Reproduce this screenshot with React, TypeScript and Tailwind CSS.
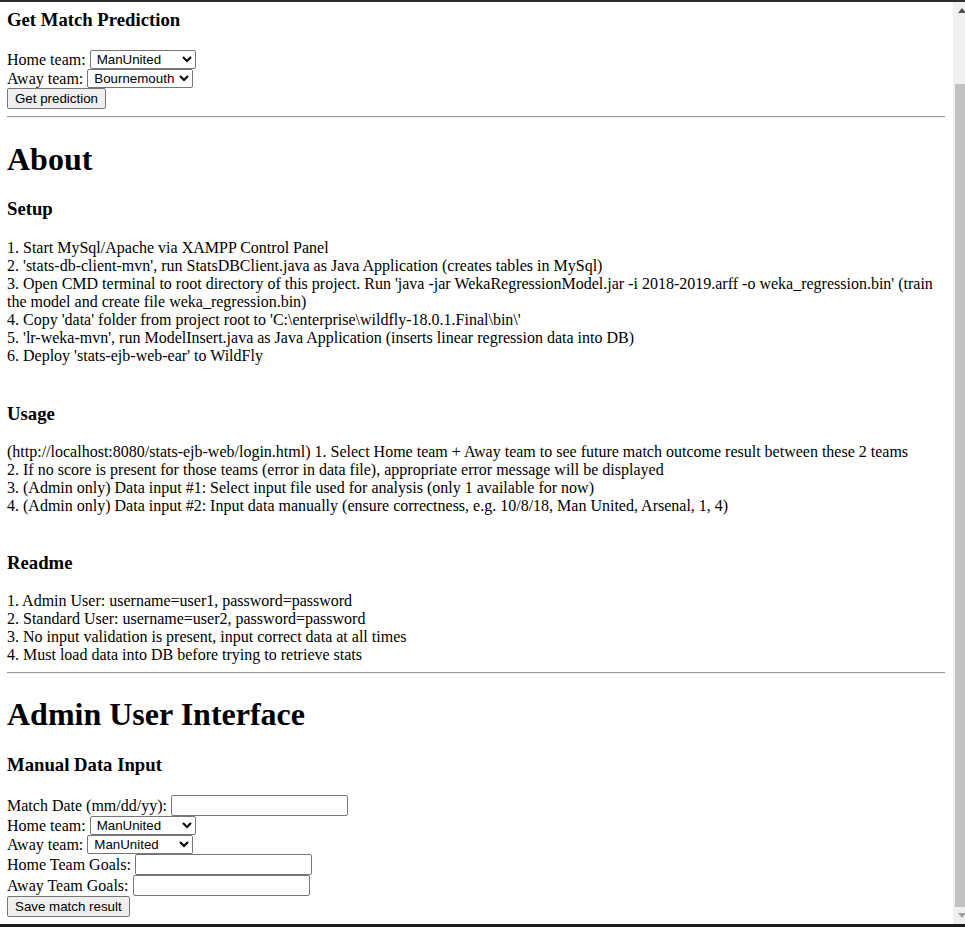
import React from "react";

const teams = ["ManUnited", "Arsenal", "Liverpool", "Chelsea", "Bournemouth", "Everton"];

const setupSteps = [
  "1. Start MySql/Apache via XAMPP Control Panel",
  "2. 'stats-db-client-mvn', run StatsDBClient.java as Java Application (creates tables in MySql)",
  "3. Open CMD terminal to root directory of this project. Run 'java -jar WekaRegressionModel.jar -i 2018-2019.arff -o weka_regression.bin' (train the model and create file weka_regression.bin)",
  "4. Copy 'data' folder from project root to 'C:\\enterprise\\wildfly-18.0.1.Final\\bin\\'",
  "5. 'lr-weka-mvn', run ModelInsert.java as Java Application (inserts linear regression data into DB)",
  "6. Deploy 'stats-ejb-web-ear' to WildFly",
];

const usageSteps = [
  "(http://localhost:8080/stats-ejb-web/login.html) 1. Select Home team + Away team to see future match outcome result between these 2 teams",
  "2. If no score is present for those teams (error in data file), appropriate error message will be displayed",
  "3. (Admin only) Data input #1: Select input file used for analysis (only 1 available for now)",
  "4. (Admin only) Data input #2: Input data manually (ensure correctness, e.g. 10/8/18, Man United, Arsenal, 1, 4)",
];

const readmeSteps = [
  "1. Admin User: username=user1, password=password",
  "2. Standard User: username=user2, password=password",
  "3. No input validation is present, input correct data at all times",
  "4. Must load data into DB before trying to retrieve stats",
];

function TeamSelect({ value }: { value: string }) {
  return (
    <select
      defaultValue={value}
      className="h-[19px] w-[106px] border border-[#767676] rounded-[2px] bg-white pl-[2px] text-[13.33px] leading-[15px] text-black font-['Liberation_Sans',Arial,sans-serif]"
    >
      {teams.map((t) => (
        <option key={t} value={t}>
          {t}
        </option>
      ))}
    </select>
  );
}

function TextBox() {
  return (
    <input
      type="text"
      className="h-[21px] w-[177px] border border-[#767676] rounded-[2px] bg-white px-[2px] text-[13.33px] font-['Liberation_Sans',Arial,sans-serif]"
    />
  );
}

function Btn({ label }: { label: string }) {
  return (
    <button className="h-[21px] px-[7px] border border-[#767676] rounded-[2px] bg-[#efefef] text-[13.33px] leading-[15px] text-black font-['Liberation_Sans',Arial,sans-serif]">
      {label}
    </button>
  );
}

function Rule() {
  return <hr className="mt-[8px] border-t border-b border-t-[#9a9a9a] border-b-[#eeeeee]" />;
}

function Steps({ items }: { items: string[] }) {
  return (
    <div className="leading-[18px]">
      {items.map((s) => (
        <div key={s}>{s}</div>
      ))}
    </div>
  );
}

function Scrollbar() {
  return (
    <div className="w-[12px] overflow-hidden bg-[#f0f0f0]">
      <div className="w-[17px] h-full flex flex-col">
        <div className="h-[17px] flex items-center justify-center">
          <svg width="8" height="5" viewBox="0 0 8 5">
            <path d="M0 5 L4 0 L8 5 Z" fill="#505050" />
          </svg>
        </div>
        <div className="flex-1 flex flex-col px-[2px]">
          <div className="h-[65px]" />
          <div className="flex-1 bg-[#c1c1c1]" />
        </div>
        <div className="h-[17px] flex items-center justify-center">
          <svg width="8" height="5" viewBox="0 0 8 5">
            <path d="M0 0 L8 0 L4 5 Z" fill="#a3a3a3" />
          </svg>
        </div>
      </div>
    </div>
  );
}

export default function App() {
  return (
    <div className="w-[965px] h-[927px] flex flex-col bg-white text-black text-[16px] font-['Liberation_Serif','Times_New_Roman',serif] border-t-2 border-b-[3px] border-t-[#2e2e2e] border-b-[#1c1c1c] overflow-hidden">
      <div className="flex-1 flex min-h-0">
        <div className="flex-1 pl-[7px] pr-[8px] overflow-hidden">
          <h3 className="mt-[7px] text-[18.72px] leading-[22px] font-bold">Get Match Prediction</h3>

          <div className="mt-[19px] flex flex-col">
            <div className="h-[19px] flex items-center gap-[4px]">
              <span>Home team:</span>
              <TeamSelect value="ManUnited" />
            </div>
            <div className="h-[19px] flex items-center gap-[4px]">
              <span>Away team:</span>
              <TeamSelect value="Bournemouth" />
            </div>
            <div className="h-[20px] flex items-center">
              <Btn label="Get prediction" />
            </div>
          </div>

          <Rule />

          <h1 className="mt-[23px] text-[32px] leading-[37px] font-bold">About</h1>

          <h3 className="mt-[20px] text-[18.72px] leading-[22px] font-bold">Setup</h3>
          <div className="mt-[19px]">
            <Steps items={setupSteps} />
          </div>

          <h3 className="mt-[38px] text-[18.72px] leading-[22px] font-bold">Usage</h3>
          <div className="mt-[18px]">
            <Steps items={usageSteps} />
          </div>

          <h3 className="mt-[37px] text-[18.72px] leading-[22px] font-bold">Readme</h3>
          <div className="mt-[18px]">
            <Steps items={readmeSteps} />
          </div>

          <Rule />

          <h1 className="mt-[22px] text-[32px] leading-[37px] font-bold">Admin User Interface</h1>

          <h3 className="mt-[21px] text-[18.72px] leading-[22px] font-bold">Manual Data Input</h3>

          <div className="mt-[19px] flex flex-col">
            <div className="h-[21px] flex items-center gap-[4px]">
              <span>Match Date (mm/dd/yy):</span>
              <TextBox />
            </div>
            <div className="h-[19px] flex items-center gap-[4px]">
              <span>Home team:</span>
              <TeamSelect value="ManUnited" />
            </div>
            <div className="h-[19px] flex items-center gap-[4px]">
              <span>Away team:</span>
              <TeamSelect value="ManUnited" />
            </div>
            <div className="h-[21px] flex items-center gap-[4px]">
              <span>Home Team Goals:</span>
              <TextBox />
            </div>
            <div className="h-[21px] flex items-center gap-[4px]">
              <span>Away Team Goals:</span>
              <TextBox />
            </div>
            <div className="h-[21px] flex items-center">
              <Btn label="Save match result" />
            </div>
          </div>
        </div>
        <Scrollbar />
      </div>
    </div>
  );
}
